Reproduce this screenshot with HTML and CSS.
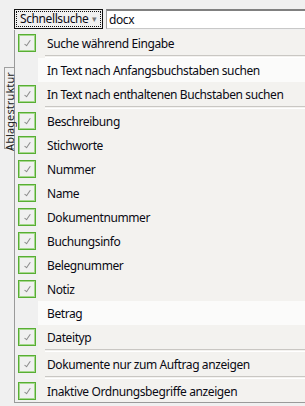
FILE: index.html
```html
<!DOCTYPE html>
<html lang="de">
<head>
  <meta charset="UTF-8" />
  <meta name="viewport" content="width=device-width, initial-scale=1.0" />
  <title>Schnellsuche</title>
  <link rel="stylesheet" href="styles.css">
</head>
<body>
  <div id="search-bar">
    <button id="mode-btn">Schnellsuche<span class="arrow">▾</span></button>
    <input type="text" id="search-input" value="docx" autocomplete="off" />
  </div>

  <div id="main">
    <div id="side">
      <div class="side-tab"><span>Ablagestruktur</span></div>
    </div>

    <div id="menu">
      <div class="item checked"><span class="gutter"><span class="box"></span></span><span class="label">Suche während Eingabe</span></div>
      <div class="sep"></div>
      <div class="item"><span class="gutter"></span><span class="label">In Text nach Anfangsbuchstaben suchen</span></div>
      <div class="item checked"><span class="gutter"><span class="box"></span></span><span class="label">In Text nach enthaltenen Buchstaben suchen</span></div>
      <div class="sep"></div>
      <div class="item checked"><span class="gutter"><span class="box"></span></span><span class="label">Beschreibung</span></div>
      <div class="item checked"><span class="gutter"><span class="box"></span></span><span class="label">Stichworte</span></div>
      <div class="item checked"><span class="gutter"><span class="box"></span></span><span class="label">Nummer</span></div>
      <div class="item checked"><span class="gutter"><span class="box"></span></span><span class="label">Name</span></div>
      <div class="item checked"><span class="gutter"><span class="box"></span></span><span class="label">Dokumentnummer</span></div>
      <div class="item checked"><span class="gutter"><span class="box"></span></span><span class="label">Buchungsinfo</span></div>
      <div class="item checked"><span class="gutter"><span class="box"></span></span><span class="label">Belegnummer</span></div>
      <div class="item checked"><span class="gutter"><span class="box"></span></span><span class="label">Notiz</span></div>
      <div class="item"><span class="gutter"></span><span class="label">Betrag</span></div>
      <div class="item checked"><span class="gutter"><span class="box"></span></span><span class="label">Dateityp</span></div>
      <div class="sep"></div>
      <div class="item checked"><span class="gutter"><span class="box"></span></span><span class="label">Dokumente nur zum Auftrag anzeigen</span></div>
      <div class="sep"></div>
      <div class="item checked"><span class="gutter"><span class="box"></span></span><span class="label">Inaktive Ordnungsbegriffe anzeigen</span></div>
    </div>
  </div>
</body>
</html>
```

FILE: styles.css
```css
* {
  box-sizing: border-box;
  margin: 0;
  padding: 0;
}

body {
  font-family: 'Noto Sans', sans-serif;
  font-size: 12px;
  letter-spacing: -0.4px;
  background: #f0f0f0;
  color: #0a0a14;
  height: 100vh;
  overflow: hidden;
}

#search-bar {
  display: flex;
  padding: 9px 0 0 14px;
  height: 30px;
}

#mode-btn {
  width: 89px;
  height: 20px;
  font: inherit;
  letter-spacing: -0.4px;
  color: #0a0a14;
  background: #f0f0f0;
  border: 1px solid #111;
  outline: 1px dotted #111;
  outline-offset: -3px;
  text-align: left;
  padding: 0 0 0 5px;
  line-height: 16px;
}

#mode-btn .arrow {
  color: #777;
  font-size: 9px;
  vertical-align: 1px;
  margin-left: 4px;
}

#search-input {
  flex: 1;
  margin-left: 3px;
  height: 20px;
  font: inherit;
  letter-spacing: -0.4px;
  color: #0a0a14;
  background: #fff;
  border: none;
  border-top: 2px solid #808080;
  border-left: 1px solid #a0a0a0;
  border-bottom: 1px solid #c8c8c8;
  padding: 0 0 1px 2px;
  outline: none;
}

#main {
  display: flex;
}

#side {
  width: 14px;
  padding: 37px 0 0 4px;
}

.side-tab {
  height: 82px;
  width: 10px;
  border: 1px solid #a0a0a0;
  border-right: none;
  padding-top: 4px;
}

.side-tab span {
  display: block;
  writing-mode: vertical-rl;
  transform: rotate(180deg);
  font-size: 11px;
  letter-spacing: 0.1px;
  line-height: 9px;
  color: #222;
}

#menu {
  flex: 1;
  border-left: 1px solid #9a9a9a;
  border-bottom: 1px solid #9a9a9a;
  padding-top: 1px;
  background: linear-gradient(to right, #f0f0f0 23px, #f3f2ef 23px);
  height: 373px;
}

.item {
  display: flex;
  height: 24px;
  align-items: stretch;
}

.gutter {
  width: 23px;
  display: flex;
  align-items: center;
  padding-left: 3px;
}

.box {
  width: 18px;
  height: 18px;
  border: 1px solid #58ae34;
  box-shadow: inset 0 0 0 1px #a6d88e;
  position: relative;
}

.box::after {
  content: '';
  position: absolute;
  left: 7px;
  top: 4px;
  width: 2px;
  height: 6px;
  border-right: 1px solid #8a8a8a;
  border-bottom: 1px solid #8a8a8a;
  transform: rotate(35deg);
}

.label {
  flex: 1;
  display: flex;
  align-items: center;
  padding-left: 9px;
  white-space: nowrap;
}

.item:not(.checked) .label {
  background: #fbfbfa;
}

.sep {
  height: 3px;
  margin-left: 30px;
  border-top: 1px solid #c9c7c3;
  border-bottom: 1px solid #fff;
}
```
